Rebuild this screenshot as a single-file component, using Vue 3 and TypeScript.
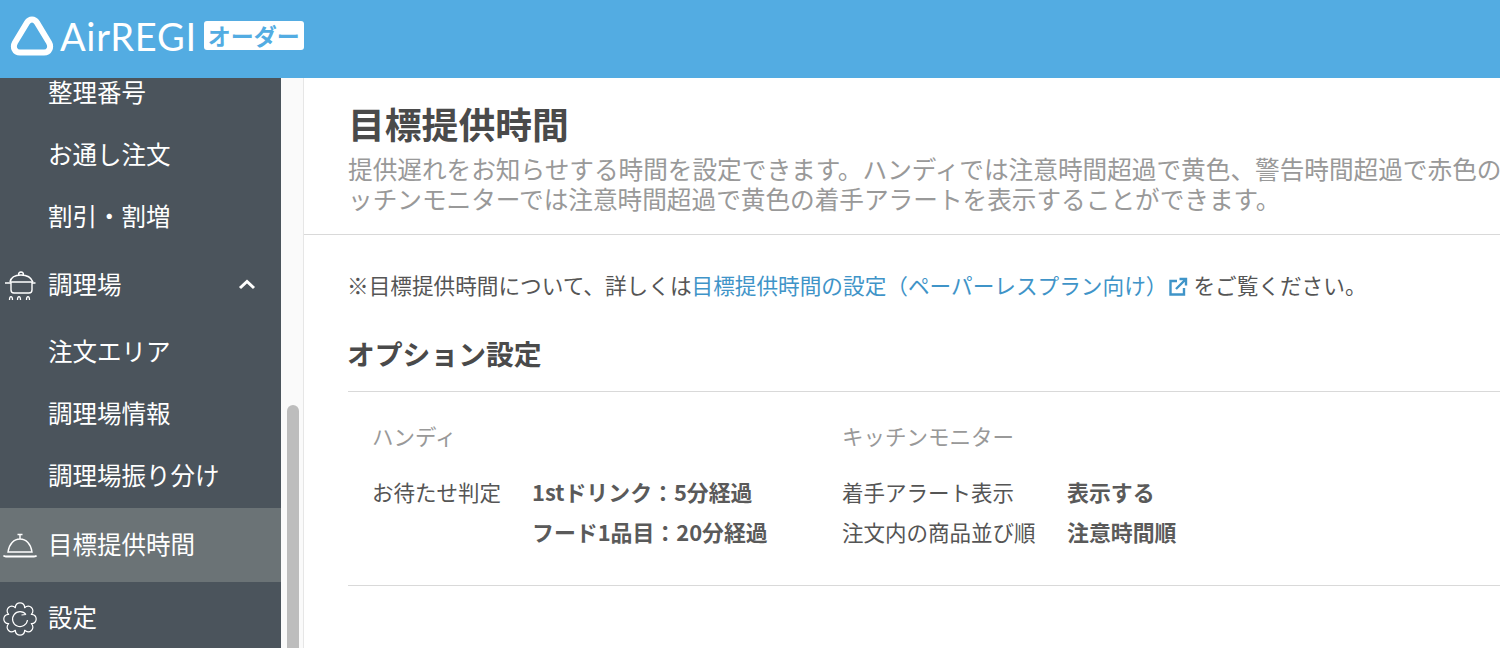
<script setup lang="ts">
const subA: string[] = ['整理番号', 'お通し注文', '割引・割増']
const subB: string[] = ['注文エリア', '調理場情報', '調理場振り分け']

function gearPath(cx: number, cy: number, outer: number, inner: number, teeth: number): string {
  const pt = (r: number, a: number): string =>
    `${(cx + r * Math.cos(a)).toFixed(2)} ${(cy + r * Math.sin(a)).toFixed(2)}`
  const step = (Math.PI * 2) / teeth
  let d = `M${pt(inner, -step / 2)}`
  for (let i = 0; i < teeth; i++) {
    const a = i * step
    d += ` C${pt(outer + 1, a - step * 0.34)} ${pt(outer + 1, a + step * 0.34)} ${pt(inner, a + step / 2)}`
  }
  return d + ' Z'
}
const gear = gearPath(17, 17, 17.5, 12.2, 8)
</script>

<template>
  <div class="page">
    <header class="top">
      <svg class="logo" width="44" height="40" viewBox="0 0 44 40" fill="none">
        <path d="M22 3.5 C19.6 3.5 18 5 17 6.6 L5 26.5 C2.5 31 4.5 36.5 10 36.5 H34 C39.5 36.5 41.5 31 39 26.5 L27 6.6 C26 5 24.4 3.5 22 3.5 Z" stroke="#fff" stroke-width="6" stroke-linejoin="round" />
      </svg>
      <span class="brand">AirREGI</span>
      <span class="tag">オーダー</span>
    </header>
    <div class="body">
      <nav class="side">
        <div class="first-list">
          <div v-for="s in subA" :key="s" class="sub">{{ s }}</div>
        </div>
        <div class="group pot">
          <svg class="ico" width="34" height="34" viewBox="0 0 34 34" fill="none" stroke="#fff" stroke-width="1.4">
            <path d="M8 15 H29 V23 C29 25 28 26 26 26 H11 C9 26 8 25 8 23 Z M2 16 H8 M29 16 H32.5" />
            <path d="M7 15 C8 10 13 8 18 8 C23 8 28 10 30 15 M15.5 8 C15.5 4 20.5 4 20.5 8" />
            <path d="M6.5 33 C6.5 28.5 9.5 28.5 9.5 33 M14.5 33 C14.5 28.5 17.5 28.5 17.5 33 M23.5 33 C23.5 28.5 26.5 28.5 26.5 33" stroke-width="1.3" />
          </svg>
          <span>調理場</span>
          <svg class="chev" width="18" height="12" viewBox="0 0 18 12" fill="none" stroke="#fff" stroke-width="3">
            <path d="M2 10 L9 3.5 L16 10" />
          </svg>
        </div>
        <div class="second">
          <div v-for="s in subB" :key="s" class="sub">{{ s }}</div>
        </div>
        <div class="group active">
          <svg class="ico" width="38" height="28" viewBox="0 0 38 28" fill="none" stroke="#fff" stroke-width="1.4">
            <path d="M5 21 C6 13 11 8 17 8 C23 8 28 13 29 21 Z M17 8 V4 M14.5 3.5 H19.5" />
            <path d="M0.5 24.5 C1 25.5 2 25.5 3 25.5 H31 C32 25.5 33 25.5 33.5 24.5" stroke-width="1.8" />
          </svg>
          <span>目標提供時間</span>
        </div>
        <div class="group gear">
          <svg class="ico gear-ico" width="34" height="34" viewBox="0 0 34 34" fill="none" stroke="#fff" stroke-width="1.2">
            <path :d="gear" stroke-linejoin="round" />
            <path d="M23 12.5 A7.5 7.5 0 1 0 24.5 18 M23 12.5 L18.5 13" />
          </svg>
          <span>設定</span>
        </div>
      </nav>
      <div class="track"><div class="thumb"></div></div>
      <main class="main">
        <section class="head">
          <h1>目標提供時間</h1>
          <p>提供遅れをお知らせする時間を設定できます。ハンディでは注意時間超過で黄色、警告時間超過で赤色の<br />ッチンモニターでは注意時間超過で黄色の着手アラートを表示することができます。</p>
        </section>
        <section class="content">
          <div class="note">
            ※目標提供時間について、詳しくは<a class="link">目標提供時間の設定（ペーパーレスプラン向け）</a><svg class="ext" width="20" height="20" viewBox="0 0 20 20" fill="none" stroke="#3f94c8" stroke-width="2.4"><path d="M9 4 H2.5 V17.5 H16 V11" /><path d="M8 12 L17 3 M11.5 2 H18 V8.5" /></svg>をご覧ください。
          </div>
          <h2>オプション設定</h2>
          <div class="table">
            <div class="col col-a">
              <div class="title">ハンディ</div>
              <div class="row"><span class="key key-a">お待たせ判定</span><b>1stドリンク：5分経過</b></div>
              <div class="row"><span class="key key-a"></span><b>フード1品目：20分経過</b></div>
            </div>
            <div class="col">
              <div class="title">キッチンモニター</div>
              <div class="row"><span class="key key-b">着手アラート表示</span><b>表示する</b></div>
              <div class="row"><span class="key key-b">注文内の商品並び順</span><b>注意時間順</b></div>
            </div>
          </div>
        </section>
      </main>
    </div>
  </div>
</template>

<style>
html, body { margin: 0; background: #fff; }
</style>

<style scoped>
.page {
  width: 1500px;
  height: 648px;
  overflow: hidden;
  display: flex;
  flex-direction: column;
  font-family: "Noto Sans CJK JP", "Noto Sans", sans-serif;
  color: #555;
}
.top {
  height: 78px;
  flex: none;
  background: #53ace2;
  display: flex;
  align-items: center;
  padding: 0 0 7px 10px;
  box-sizing: border-box;
  color: #fff;
}
.logo { flex: none; margin-right: 6px; }
.brand {
  font-family: Lato, "Noto Sans", sans-serif;
  font-size: 38px;
  line-height: 40px;
  letter-spacing: 0.7px;
}
.tag {
  margin-left: 7px;
  width: 100px;
  height: 29px;
  background: #fff;
  border-radius: 3px;
  color: #53ace2;
  font-size: 23px;
  font-weight: 700;
  line-height: 29px;
  text-align: center;
  white-space: nowrap;
}
.body { flex: 1; display: flex; min-height: 0; }
.side {
  width: 281px;
  flex: none;
  background: #4b545c;
  color: #fff;
  font-size: 24.5px;
}
.sub {
  height: 62px;
  box-sizing: border-box;
  padding: 16px 0 0 48px;
  line-height: 30px;
}
.first-list .sub:first-child {
  height: 45px;
  padding-top: 0;
  line-height: 28px;
}
.second { margin-top: -1px; }
.group {
  display: flex;
  align-items: center;
  position: relative;
  padding-left: 48px;
  line-height: 30px;
  box-sizing: border-box;
}
.group.pot { height: 74px; }
.group.active {
  height: 74px;
  margin-top: 2px;
  padding-bottom: 3px;
  background: #6b7376;
}
.group.gear { height: 70px; }
.ico { position: absolute; left: 3px; top: 50%; transform: translateY(-50%); }
.gear-ico { margin-top: 2px; }
.chev { position: absolute; left: 238px; top: 31px; }
.track {
  width: 23px;
  flex: none;
  background: #fafafa;
  border-right: 1px solid #e6e6e6;
  box-sizing: border-box;
  position: relative;
}
.thumb {
  position: absolute;
  left: 6px;
  top: 327px;
  width: 12px;
  height: 300px;
  background: #bdbdbd;
  border-radius: 6px;
}
.main { flex: 1; min-width: 0; overflow: hidden; }
.head {
  height: 157px;
  box-sizing: border-box;
  border-bottom: 1px solid #d9d9d9;
  padding: 18px 0 0 44px;
  white-space: nowrap;
}
h1 {
  margin: 0 0 3px;
  font-size: 36.8px;
  line-height: 54px;
  font-weight: 700;
  color: #4a4a4a;
}
.head p {
  margin: 0;
  font-size: 24.65px;
  line-height: 30px;
  color: #999;
}
.content { padding: 34px 0 0 44px; }
.note {
  font-size: 21.65px;
  line-height: 32px;
  color: #555;
  white-space: nowrap;
  text-indent: -1px;
}
.link { color: #3f94c8; }
.ext { margin: 0 5px 0 1px; vertical-align: -3px; }
h2 {
  margin: 32px 0 0;
  height: 59px;
  box-sizing: border-box;
  font-size: 27.8px;
  line-height: 40px;
  font-weight: 700;
  color: #4a4a4a;
  border-bottom: 1px solid #d9d9d9;
  text-indent: -1px;
}
.table {
  display: flex;
  height: 194px;
  box-sizing: border-box;
  padding: 29px 0 0 24px;
  border-bottom: 1px solid #d9d9d9;
  font-size: 21.5px;
}
.col-a { width: 470px; flex: none; }
.title { color: #999; line-height: 30px; margin-bottom: 26px; }
.row { display: flex; height: 40px; line-height: 30px; white-space: nowrap; }
.key { flex: none; }
.key-a { width: 160px; }
.key-b { width: 225px; }
b { font-weight: 700; color: #5a5a5a; font-size: 21.9px; }
</style>
